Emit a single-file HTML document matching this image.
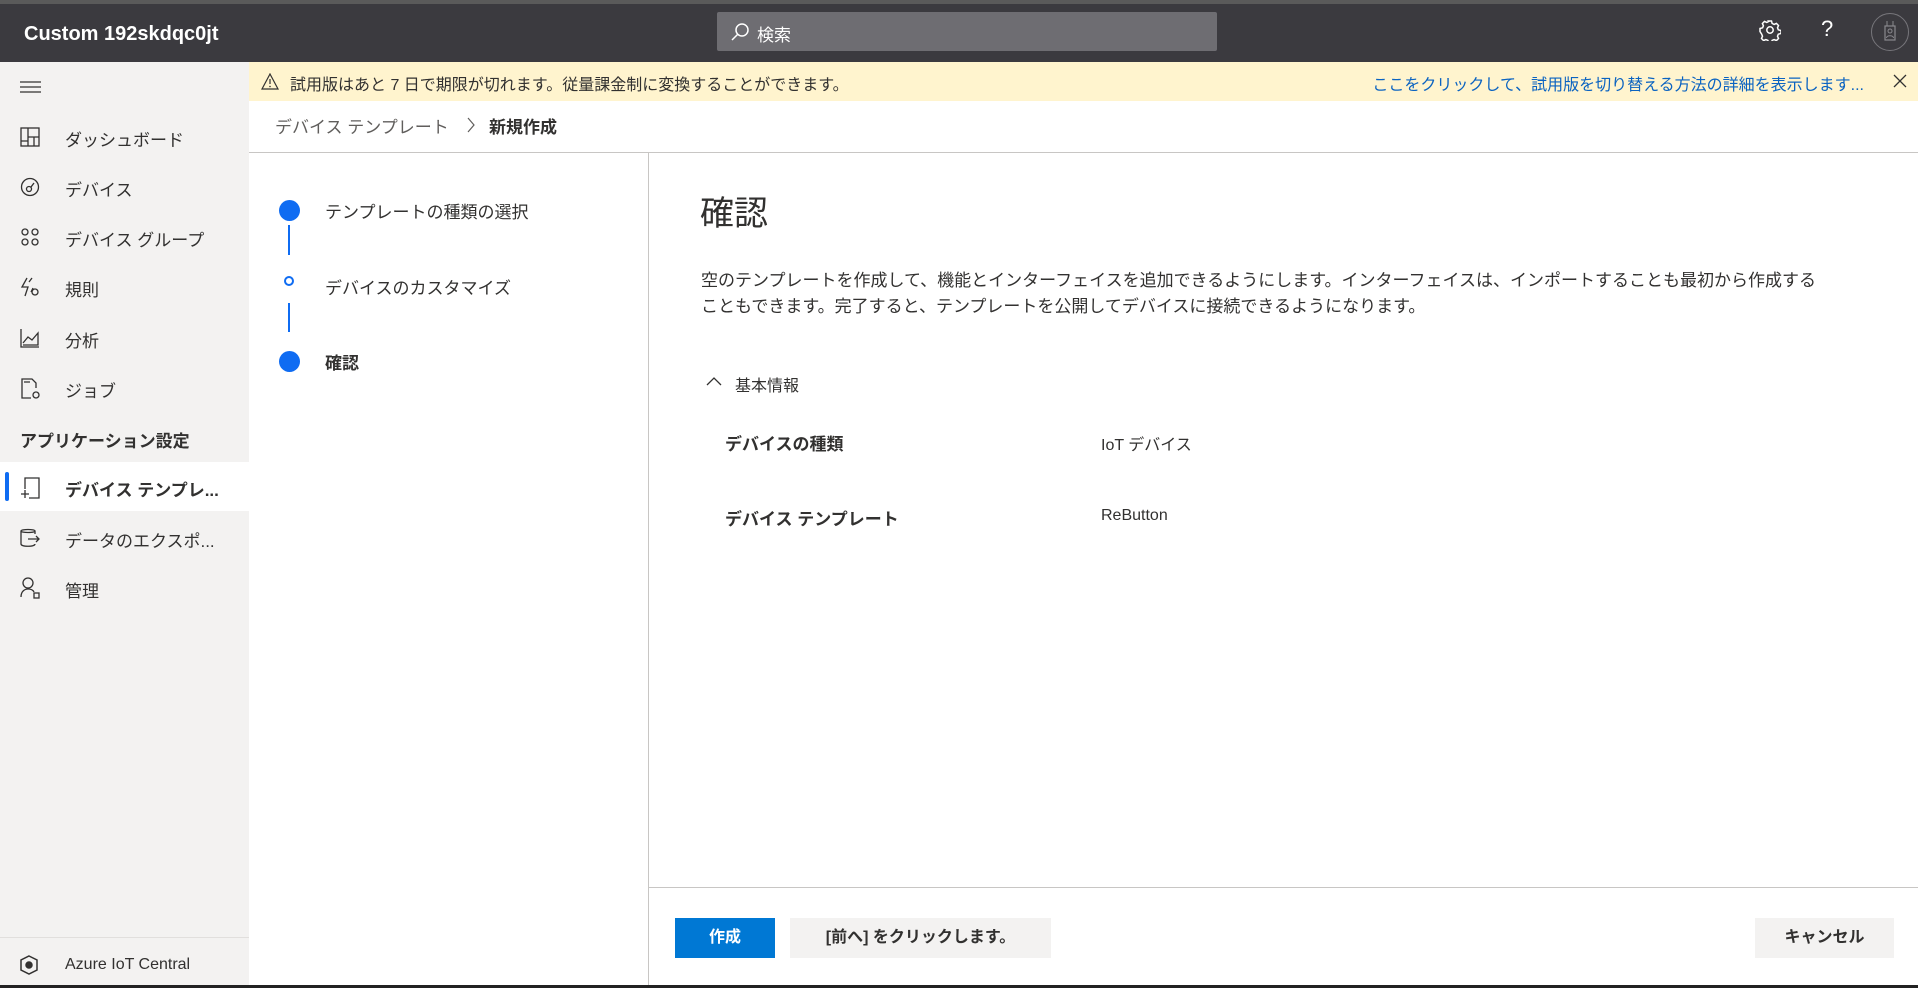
<!DOCTYPE html>
<html><head><meta charset="utf-8"><style>
*{margin:0;padding:0;box-sizing:border-box}
body{width:1918px;height:988px;overflow:hidden;font-family:"Liberation Sans","Noto Sans CJK JP",sans-serif;color:#323130;background:#fff;position:relative;font-size:17px}
.a{position:absolute;white-space:nowrap}
</style></head><body>
<div class="a" style="left:0;top:0;width:1918px;height:4px;background:#5a5a5a"></div>
<div class="a" style="left:0;top:4px;width:1918px;height:58px;background:#3b3a3f"></div>
<div class="a" style="left:24px;top:23px;color:#fff;font-weight:bold;font-size:20px">Custom 192skdqc0jt</div>
<div class="a" style="left:717px;top:12px;width:500px;height:39px;background:#6e6d72;border-radius:2px"></div>
<svg class="a" style="left:730px;top:22px" width="20" height="20" viewBox="0 0 20 20"><circle cx="12" cy="8" r="6" fill="none" stroke="#fff" stroke-width="1.5"/><line x1="8" y1="12" x2="2" y2="18" stroke="#fff" stroke-width="1.5"/></svg>
<div class="a" style="left:757px;top:21px;color:#fff;font-size:17px">検索</div>
<svg class="a" style="left:1759px;top:19px" width="22" height="22" viewBox="0 0 22 22" fill="none" stroke="#fff" stroke-width="1.5"><circle cx="11" cy="11" r="3.2"/><path d="M9.5 2h3l.6 2.4 2 1 2.3-1 2.1 2.1-1 2.3.8 2 2.7.7v3l-2.7.7-.8 2 1 2.3-2.1 2.1-2.3-1-2 .8-.6 2.6h-3l-.6-2.6-2-.8-2.3 1-2.1-2.1 1-2.3-.8-2L1 12.5v-3l2.6-.7.8-2-1-2.3 2.1-2.1 2.3 1 2-1z"/></svg>
<div class="a" style="left:1821px;top:16px;color:#fff;font-size:22px">?</div>
<div class="a" style="left:1871px;top:13px;width:38px;height:38px;border-radius:50%;border:1px solid #77767b"></div>
<svg class="a" style="left:1880px;top:20px" width="20" height="24" viewBox="0 0 20 24"><rect x="5" y="6" width="10" height="14" fill="none" stroke="#8a898e" stroke-width="1.2"/><circle cx="10" cy="11" r="2" fill="none" stroke="#8a898e"/><path d="M6.5 18c0-3 7-3 7 0M7 6V1M13 6V1" stroke="#8a898e" fill="none"/></svg>

<div class="a" style="left:249px;top:62px;width:1669px;height:39px;background:#fff4ce"></div>
<svg class="a" style="left:261px;top:73px" width="18" height="17" viewBox="0 0 18 17"><path d="M9 1L17 16H1Z" fill="none" stroke="#323130" stroke-width="1.2"/><line x1="9" y1="6" x2="9" y2="11" stroke="#323130" stroke-width="1.2"/><circle cx="9" cy="13.5" r=".8" fill="#323130"/></svg>
<div class="a" style="left:290px;top:71px;font-size:16px">試用版はあと 7 日で期限が切れます。従量課金制に変換することができます。</div>
<div class="a" style="right:54px;top:71px;font-size:16px;color:#0b63c1">ここをクリックして、試用版を切り替える方法の詳細を表示します...</div>
<svg class="a" style="left:1893px;top:74px" width="14" height="14"><path d="M1 1L13 13M13 1L1 13" stroke="#323130" stroke-width="1.3"/></svg>

<div class="a" style="left:0;top:62px;width:249px;height:926px;background:#f3f2f1"></div>
<svg class="a" style="left:20px;top:80px" width="22" height="14"><path d="M0 2H21M0 7H21M0 12H21" stroke="#323130" stroke-width="1.2"/></svg>
<svg class="a" style="left:20px;top:127px" width="20" height="20" viewBox="0 0 20 20" fill="none" stroke="#323130" stroke-width="1.3"><rect x="1" y="1" width="18" height="18"/><path d="M8 1V19M8 10H19M1 14H8M14 10V19"/></svg>
<svg class="a" style="left:20px;top:177px" width="20" height="20" viewBox="0 0 20 20" fill="none" stroke="#323130" stroke-width="1.3"><circle cx="10" cy="10" r="8.5"/><circle cx="9" cy="12" r="2.5"/><path d="M11 10L14 6"/></svg>
<svg class="a" style="left:21px;top:227px" width="18" height="20" viewBox="0 0 18 20" fill="none" stroke="#323130" stroke-width="1.3"><circle cx="4" cy="5" r="3"/><circle cx="14" cy="5" r="3"/><circle cx="4" cy="15" r="3"/><circle cx="14" cy="15" r="3"/></svg>
<svg class="a" style="left:20px;top:277px" width="20" height="20" viewBox="0 0 20 20" fill="none" stroke="#323130" stroke-width="1.3"><path d="M7 1L2 10H8L5 19M9 5L12 1M13 11L11 15"/><circle cx="15" cy="15" r="3"/></svg>
<svg class="a" style="left:20px;top:328px" width="20" height="20" viewBox="0 0 20 20" fill="none" stroke="#323130" stroke-width="1.3"><path d="M1 1V19H19M3 15L8 9L12 12L18 5V17H3"/></svg>
<svg class="a" style="left:21px;top:378px" width="20" height="22" viewBox="0 0 20 22" fill="none" stroke="#323130" stroke-width="1.3"><path d="M10 20H1V1H11L15 5V10M3 4H9"/><circle cx="15" cy="17" r="3"/></svg>
<div class="a" style="left:65px;top:126px">ダッシュボード</div>
<div class="a" style="left:65px;top:176px">デバイス</div>
<div class="a" style="left:65px;top:226px">デバイス グループ</div>
<div class="a" style="left:65px;top:276px">規則</div>
<div class="a" style="left:65px;top:327px">分析</div>
<div class="a" style="left:65px;top:377px">ジョブ</div>
<div class="a" style="left:20px;top:427px;font-weight:bold">アプリケーション設定</div>
<div class="a" style="left:0;top:462px;width:249px;height:49px;background:#fff"></div>
<div class="a" style="left:5px;top:472px;width:4px;height:29px;background:#0f6cf2;border-radius:2px"></div>
<svg class="a" style="left:20px;top:477px" width="21" height="22" viewBox="0 0 21 22" fill="none" stroke="#323130" stroke-width="1.3"><path d="M5 12V1H19V21H9M1 17H9M5 13V21"/></svg>
<div class="a" style="left:65px;top:476px;font-weight:bold">デバイス テンプレ...</div>
<svg class="a" style="left:20px;top:528px" width="20" height="20" viewBox="0 0 20 20" fill="none" stroke="#323130" stroke-width="1.3"><path d="M15 6V3C15 1 1 1 1 3V16C1 19 15 19 15 16M1 3C1 5 15 5 15 3M8 11H19M16 8L19 11L16 14"/></svg>
<div class="a" style="left:65px;top:527px">データのエクスポ...</div>
<svg class="a" style="left:20px;top:577px" width="20" height="22" viewBox="0 0 20 22" fill="none" stroke="#323130" stroke-width="1.3"><circle cx="8" cy="6" r="5"/><path d="M1 20C1 14 5 12 8 12S13 13 14 15"/><rect x="14" y="16" width="5" height="5"/></svg>
<div class="a" style="left:65px;top:577px">管理</div>
<div class="a" style="left:0;top:937px;width:249px;height:1px;background:#e1dfdd"></div>
<svg class="a" style="left:20px;top:955px" width="18" height="20" viewBox="0 0 18 20" fill="none" stroke="#323130" stroke-width="1.5"><path d="M9 1L17 5V15L9 19L1 15V5Z"/><circle cx="9" cy="10" r="3" fill="#323130"/></svg>
<div class="a" style="left:65px;top:956px;font-size:16px">Azure IoT Central</div>

<div class="a" style="left:275px;top:113px;color:#605e5c">デバイス テンプレート</div>
<svg class="a" style="left:466px;top:117px" width="10" height="16"><path d="M2 1L8 8L2 15" stroke="#605e5c" stroke-width="1.2" fill="none"/></svg>
<div class="a" style="left:489px;top:113px;font-weight:bold">新規作成</div>
<div class="a" style="left:249px;top:152px;width:1669px;height:1px;background:#c8c6c4"></div>
<div class="a" style="left:648px;top:152px;width:1px;height:836px;background:#c8c6c4"></div>

<div class="a" style="left:279px;top:200px;width:21px;height:21px;border-radius:50%;background:#0f6cf2"></div>
<div class="a" style="left:288px;top:225px;width:2px;height:30px;background:#0f6cf2"></div>
<div class="a" style="left:284px;top:276px;width:10px;height:10px;border-radius:50%;border:2.5px solid #0f6cf2"></div>
<div class="a" style="left:288px;top:303px;width:2px;height:29px;background:#0f6cf2"></div>
<div class="a" style="left:279px;top:351px;width:21px;height:21px;border-radius:50%;background:#0f6cf2"></div>
<div class="a" style="left:325px;top:198px">テンプレートの種類の選択</div>
<div class="a" style="left:325px;top:274px">デバイスのカスタマイズ</div>
<div class="a" style="left:325px;top:349px;font-weight:bold">確認</div>

<div class="a" style="left:700px;top:186px;font-size:34px">確認</div>
<div class="a" style="left:701px;top:268px;line-height:26px">空のテンプレートを作成して、機能とインターフェイスを追加できるようにします。インターフェイスは、インポートすることも最初から作成する<br>こともできます。完了すると、テンプレートを公開してデバイスに接続できるようになります。</div>
<svg class="a" style="left:706px;top:376px" width="16" height="10"><path d="M1 9L8 2L15 9" stroke="#323130" stroke-width="1.3" fill="none"/></svg>
<div class="a" style="left:735px;top:372px;font-size:16px">基本情報</div>
<div class="a" style="left:725px;top:430px;font-weight:bold">デバイスの種類</div>
<div class="a" style="left:1101px;top:431px;font-size:16px">IoT デバイス</div>
<div class="a" style="left:725px;top:505px;font-weight:bold">デバイス テンプレート</div>
<div class="a" style="left:1101px;top:507px;font-size:16px">ReButton</div>

<div class="a" style="left:648px;top:887px;width:1270px;height:1px;background:#c8c6c4"></div>
<div class="a" style="left:675px;top:918px;width:100px;height:40px;background:#0078d4;color:#fff;font-weight:bold;font-size:16px;text-align:center;line-height:40px">作成</div>
<div class="a" style="left:790px;top:918px;width:261px;height:40px;background:#f3f2f1;font-weight:bold;font-size:16px;text-align:center;line-height:40px">[前へ] をクリックします。</div>
<div class="a" style="left:1755px;top:918px;width:139px;height:40px;background:#f3f2f1;font-weight:bold;font-size:16px;text-align:center;line-height:40px">キャンセル</div>
<div class="a" style="left:0;top:985px;width:1918px;height:3px;background:#222"></div>
</body></html>
